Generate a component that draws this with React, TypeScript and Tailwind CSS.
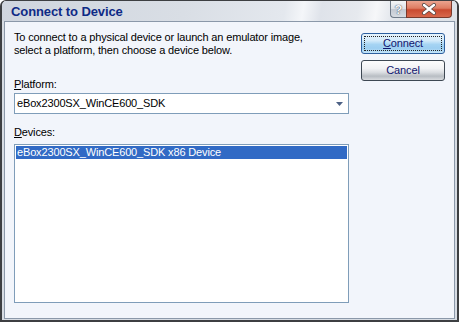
import React from "react";

export default function App() {
  const font = { fontFamily: '"Liberation Sans", Arial, sans-serif' };
  return (
    <div className="w-[459px] h-[322px] bg-white" style={font}>
      <div className="w-full h-full flex flex-col border-t border-l-2 border-r-2 border-b-2 border-[#3d3f42] rounded-t-[6px] bg-[#D7DCE3] overflow-hidden">
        {/* Title bar */}
        <div className="h-[20px] flex items-start bg-[linear-gradient(100deg,#cfd5de_0%,#d9dee5_40%,#e4e8ee_62%,#f4f6f9_66%,#dfe3ea_70%,#e6e9ee_78%,#f6f7f9_82%,#e1e5eb_86%,#dde2e8_100%)]">
          <span className="ml-[9px] mt-[3px] text-[13px] leading-[15px] font-bold text-[#0E2A86] tracking-[-0.1px]">
            Connect to Device
          </span>
          <div className="ml-auto mr-[5px] flex h-[17px]">
            <div className="w-[16px] h-[17px] border border-t-0 border-r-0 border-[#6f7a88] rounded-bl-[4px] bg-[linear-gradient(to_bottom,#f3f5f7,#dde1e7_50%,#c3c9d2_52%,#d7dce2)] flex items-center justify-center">
              <span className="text-[13px] font-bold leading-none text-[#f5f6f8] [text-shadow:0_0_1px_#4b5563,0_0_1px_#4b5563]">?</span>
            </div>
            <div className="w-[46px] h-[17px] border border-t-0 border-[#7a3a2c] rounded-br-[4px] bg-[linear-gradient(to_bottom,#eba48f,#de7c62_45%,#c94a30_55%,#d8684c)] flex items-center justify-center">
              <svg width="16" height="12" viewBox="0 0 16 12">
                <path d="M3 2 L13 10 M13 2 L3 10" stroke="#5a4a46" strokeWidth="4" strokeLinecap="round" />
                <path d="M3 2 L13 10 M13 2 L3 10" stroke="#ffffff" strokeWidth="2.4" strokeLinecap="round" />
              </svg>
            </div>
          </div>
        </div>
        {/* Body */}
        <div className="flex-1 mx-[2px] mb-[1px] border border-[#8b98a9] bg-[#F2F5FB] flex pl-[9px] pt-[9px] text-[11px] leading-[13px] text-black tracking-[-0.15px]">
          <div className="w-[335px] flex flex-col">
            <p>
              To connect to a physical device or launch an emulator image,
              <br />
              select a platform, then choose a device below.
            </p>
            <div className="mt-[21px]">
              <span className="underline underline-offset-[1px]">P</span>latform:
            </div>
            <div className="mt-[2px] h-[21px] border border-[#7F9DB9] bg-white flex items-center pl-[2px] pr-[5px]">
              <span>eBox2300SX_WinCE600_SDK</span>
              <svg className="ml-auto" width="7" height="4" viewBox="0 0 7 4">
                <path d="M0 0 H7 L3.5 4 Z" fill="#4D6185" />
              </svg>
            </div>
            <div className="mt-[12px]">
              <span className="underline underline-offset-[1px]">D</span>evices:
            </div>
            <div className="mt-[5px] h-[159px] border border-[#7F9DB9] bg-white p-[1px]">
              <div className="h-[13px] bg-[#316AC5] text-white pl-[1px] leading-[13px]">
                eBox2300SX_WinCE600_SDK x86 Device
              </div>
            </div>
          </div>
          <div className="ml-[12px] w-[84px] flex flex-col pt-[2px] gap-[6px]">
            <button className="h-[21px] border border-[#2D5F9F] rounded-[3px] bg-[linear-gradient(to_bottom,#e6f3fc,#d3eafa_35%,#a6d4f3_55%,#9ccef1_75%,#c4e4f8)] p-[2px] text-[#10146e]">
              <div className="h-full border border-dotted border-[#222] flex items-center justify-center">
                <span><span className="underline underline-offset-[1px]">C</span>onnect</span>
              </div>
            </button>
            <button className="h-[21px] border border-[#3E4853] rounded-[3px] bg-[linear-gradient(to_bottom,#fdfdfd,#f1f2f4_40%,#dadde1_60%,#b8bdc3_80%,#d8dbdf)] text-[#10146e] flex items-center justify-center">
              Cancel
            </button>
          </div>
        </div>
      </div>
    </div>
  );
}
